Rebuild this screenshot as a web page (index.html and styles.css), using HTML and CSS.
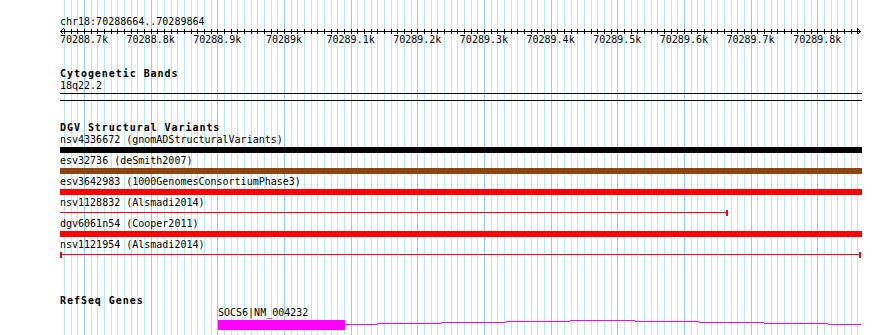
FILE: index.html
```html
<!DOCTYPE html>
<html lang="en">
<head>
    <meta charset="UTF-8">
    <meta name="viewport" content="width=device-width, initial-scale=1.0">
    <title>chr18:70288664..70289864</title>
    <link rel="stylesheet" href="styles.css">
</head>
<body>
    <div class="panel">
        <!-- Grid lines (drawn by script) -->
        <svg class="grid-lines" id="gridLines" width="802" height="335"></svg>

        <div class="tracks">
            <div class="locus">chr18:70288664..70289864</div>

            <!-- Ruler -->
            <svg class="ruler" id="ruler" width="802" height="7">
                <line class="ruler-axis" x1="0" y1="3.5" x2="801" y2="3.5"/>
                <polyline class="ruler-axis" points="3.5,0.5 0.5,3.5 3.5,6.5"/>
                <polyline class="ruler-axis" points="797.5,0.5 800.5,3.5 797.5,6.5"/>
            </svg>
            <div class="ruler-labels">
                <span>70288.7k</span>
                <span>70288.8k</span>
                <span>70288.9k</span>
                <span>70289k</span>
                <span>70289.1k</span>
                <span>70289.2k</span>
                <span>70289.3k</span>
                <span>70289.4k</span>
                <span>70289.5k</span>
                <span>70289.6k</span>
                <span>70289.7k</span>
                <span>70289.8k</span>
            </div>

            <!-- Cytogenetic Bands -->
            <div class="track-title">Cytogenetic Bands</div>
            <div class="feature-label">18q22.2</div>
            <div class="band"></div>

            <!-- DGV Structural Variants -->
            <div class="track-title dgv-title">DGV Structural Variants</div>
            <div class="feature-label">nsv4336672 (gnomADStructuralVariants)</div>
            <div class="bar bar-black"></div>
            <div class="feature-label">esv32736 (deSmith2007)</div>
            <div class="bar bar-brown"></div>
            <div class="feature-label">esv3642983 (1000GenomesConsortiumPhase3)</div>
            <div class="bar bar-red"></div>
            <div class="feature-label">nsv1128832 (Alsmadi2014)</div>
            <div class="span cap-right" style="width: 668px;"></div>
            <div class="feature-label">dgv6061n54 (Cooper2011)</div>
            <div class="bar bar-red"></div>
            <div class="feature-label">nsv1121954 (Alsmadi2014)</div>
            <div class="span cap-left cap-right" style="width: 801px;"></div>

            <!-- RefSeq Genes -->
            <div class="track-title refseq-title">RefSeq Genes</div>
            <div class="feature-label gene-label">SOCS6|NM_004232</div>
            <svg class="gene" width="802" height="12">
                <rect class="exon" x="158" y="1" width="127" height="10"/>
                <path class="intron" d="M285 5.5H317 M317 4.5H381 M381 3.5H446 M446 2.5H510 M510 1.5H575 M575 2.5H639 M639 3.5H704 M704 4.5H768 M768 5.5H801"/>
            </svg>
        </div>
    </div>

    <script>
        const grid = document.getElementById('gridLines');
        const ruler = document.getElementById('ruler');
        const start = 70288664;
        const end = 70289864;

        // Convertir posición en pares de bases a pixel
        function toPx(bp) {
            return Math.round((bp - start) * 800 / (end - start));
        }

        let gridSvg = "";
        let tickSvg = "";
        for (let bp = Math.ceil(start / 10) * 10; bp < end; bp += 10) {
            const x = toPx(bp) + 0.5;
            const cls = bp % 100 === 0 ? "major" : "minor";
            gridSvg += `<line class="${cls}" x1="${x}" y1="0" x2="${x}" y2="335"/>`;
            tickSvg += `<line class="ruler-axis" x1="${x}" y1="1" x2="${x}" y2="6"/>`;
        }
        grid.innerHTML = gridSvg;
        ruler.insertAdjacentHTML('beforeend', tickSvg);
    </script>
</body>
</html>
```

FILE: styles.css
```css
body {
    margin: 0;
    background-color: #ffffff;
    color: #000000;
    font-family: "DejaVu Sans Mono", monospace;
    font-size: 10px;
}

.panel {
    display: grid;
    width: 802px;
    margin-left: 60px;
}

.grid-lines,
.tracks {
    grid-area: 1 / 1;
}

.grid-lines {
    display: block;
    shape-rendering: crispEdges;
}

.grid-lines .minor {
    stroke: #afeeee;
    stroke-width: 1;
}

.grid-lines .major {
    stroke: #87cefa;
    stroke-width: 1;
}

.locus {
    margin-top: 16px;
    height: 12px;
    line-height: 12px;
    white-space: nowrap;
}

.ruler {
    display: block;
    overflow: visible;
    shape-rendering: crispEdges;
}

.ruler-axis {
    stroke: #000000;
    stroke-width: 1;
    fill: none;
}

.ruler-labels {
    display: flex;
    height: 10px;
    line-height: 10px;
    margin-left: -9.333px;
    white-space: nowrap;
}

.ruler-labels span {
    flex: 0 0 66.667px;
    text-align: center;
}

.track-title {
    margin-top: 23px;
    height: 12px;
    line-height: 12px;
    font-weight: bold;
    letter-spacing: 0.95px;
    white-space: nowrap;
}

.dgv-title {
    margin-top: 21px;
}

/* el margen inferior de la fila anterior se colapsa */
.refseq-title {
    margin-top: 37px;
}

.feature-label {
    height: 12px;
    line-height: 12px;
    white-space: nowrap;
}

.band {
    margin-top: 1px;
    height: 6px;
    border-top: 1px solid #000000;
    border-bottom: 1px solid #000000;
}

.bar {
    margin-top: 1px;
    margin-bottom: 2px;
    height: 6px;
}

.bar-black {
    background-color: #000000;
}

.bar-brown {
    background-color: #8b4513;
}

.bar-red {
    background-color: #ff0000;
}

.span {
    box-sizing: border-box;
    margin-top: 1px;
    margin-bottom: 2px;
    height: 6px;
    background: linear-gradient(#ff0000, #ff0000) 0 2px / 100% 1px no-repeat;
}

.cap-left {
    border-left: 2px solid #ff0000;
}

.cap-right {
    border-right: 2px solid #ff0000;
}

.gene-label {
    margin-left: 158px;
}

.gene {
    display: block;
    shape-rendering: crispEdges;
}

.exon {
    fill: #ff00ff;
}

.intron {
    stroke: #ff00ff;
    stroke-width: 1;
    fill: none;
}
```
